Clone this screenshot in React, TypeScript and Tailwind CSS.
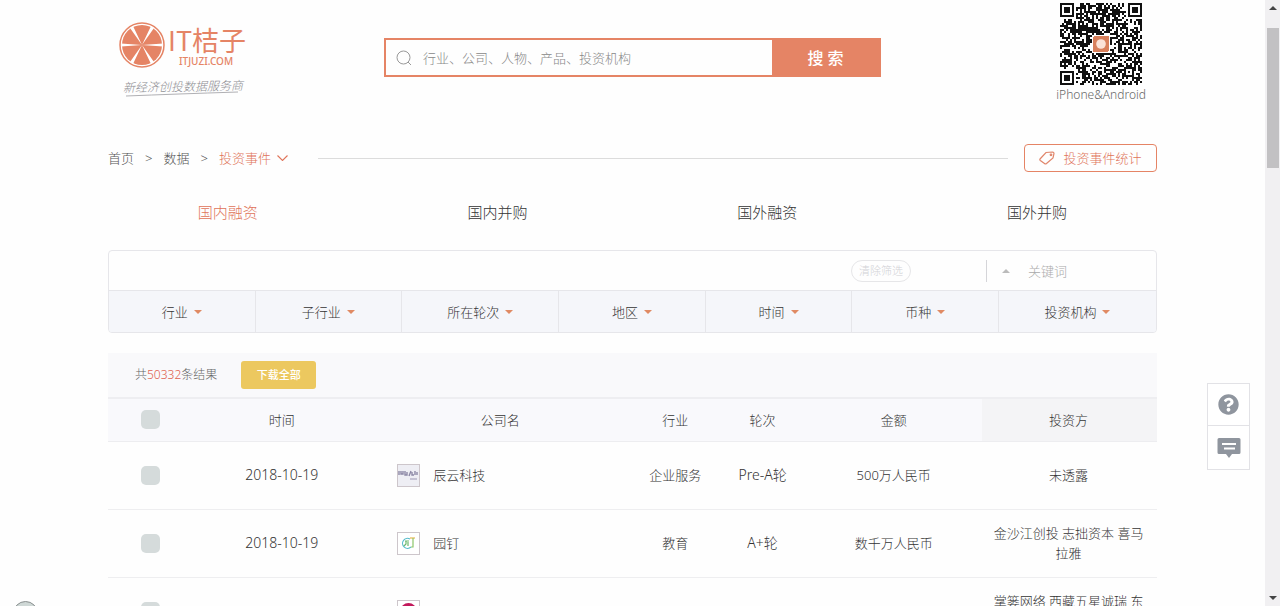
import React, { useState } from "react";
import { FaQuestionCircle } from "react-icons/fa";

const tabs = ["国内融资", "国内并购", "国外融资", "国外并购"];

const filters = ["行业", "子行业", "所在轮次", "地区", "时间", "币种", "投资机构"];

type Deal = {
  date: string;
  logo: "chenyun" | "yuanding" | "round";
  company: string;
  industry: string;
  round: string;
  amount: string;
  investors: string;
};

const deals: Deal[] = [
  { date: "2018-10-19", logo: "chenyun", company: "辰云科技", industry: "企业服务", round: "Pre-A轮", amount: "500万人民币", investors: "未透露" },
  { date: "2018-10-19", logo: "yuanding", company: "园钉", industry: "教育", round: "A+轮", amount: "数千万人民币", investors: "金沙江创投 志拙资本 喜马拉雅" },
  { date: "", logo: "round", company: "", industry: "", round: "", amount: "", investors: "掌篓网络 西藏五星诚瑞 东方" },
];

const QR_SIZE = 41;

// finder squares in three corners, one alignment square, noise elsewhere
function qrModules() {
  const cells: string[] = [];
  let seed = 20181;
  const ring = (x: number, y: number, cx: number, cy: number) => Math.max(Math.abs(x - cx), Math.abs(y - cy));
  for (let y = 0; y < QR_SIZE; y++) {
    for (let x = 0; x < QR_SIZE; x++) {
      seed = (seed * 1103515245 + 12345) % 2147483648;
      let dark = seed / 2147483648 > 0.42;
      const d = Math.min(ring(x, y, 3, 3), ring(x, y, 37, 3), ring(x, y, 3, 37));
      if (d <= 4) dark = d !== 2 && d !== 4;
      const a = ring(x, y, 34, 34);
      if (a <= 2) dark = a !== 1;
      if (dark) cells.push(`M${x} ${y}h1v1h-1z`);
    }
  }
  return cells.join("");
}

const qrPath = qrModules();

function QrCode() {
  return (
    <svg viewBox="0 0 41 41" className="w-[82px] h-[82px]" shapeRendering="crispEdges" role="img" aria-label="QR">
      <path d={qrPath} fill="#111" />
      <rect x="16" y="16" width="9" height="9" fill="#fff" />
      <rect x="16.5" y="16.5" width="8" height="8" rx="1" fill="#d9805c" />
      <circle cx="20.5" cy="20.5" r="2.4" fill="#fbe3d8" shapeRendering="auto" />
    </svg>
  );
}

function Logo() {
  return (
    <svg viewBox="0 0 140 84" className="w-[140px] h-[84px]" role="img" aria-label="IT桔子">
      <circle cx="26" cy="29" r="22" fill="#fff" stroke="#e58465" strokeWidth="1.5" />
      <circle cx="26" cy="29" r="20" fill="#e58465" />
      <g fill="#fff">
        <path d="M5 27.500L26 29L5 30.500zM47 27.500L26 29L47 30.500z" />
        <path d="M14 12L26 29L17 10zM38 46L26 29L35 48z" />
        <path d="M38 12L26 29L35 10zM14 46L26 29L17 48z" />
      </g>
      <text x="52" y="35" fontSize="27" fontWeight="400" fill="#e58465" className="font-['Noto_Sans_CJK_SC',sans-serif]">IT桔子</text>
      <text x="63" y="49" fontSize="10" fontWeight="500" fill="#e58465" className="font-['Noto_Sans',sans-serif]">ITJUZI.COM</text>
      <text x="7" y="76" fontSize="12" fill="#8b8b90" fontStyle="italic" transform="rotate(-1 7 76)" className="font-['Noto_Sans_CJK_SC',sans-serif]">新经济创投数据服务商</text>
      <path d="M10 80Q60 78 122 76" fill="none" stroke="#b0b0b4" strokeWidth="1" />
    </svg>
  );
}

function CompanyLogo({ kind }: { kind: Deal["logo"] }) {
  return (
    <svg viewBox="0 0 23 23" className="w-[23px] h-[23px] shrink-0">
      <rect x="0.5" y="0.5" width="22" height="22" fill={kind === "chenyun" ? "#eeeef4" : "#fff"} stroke="#cdc6cb" />
      {kind === "chenyun" && (
        <g fill="none" stroke="#8d89a6" strokeWidth="1.4">
          <path d="M2 7v4M4 7v3h2v-3M8 7v4h2v-3M12 12l2-5M15 8v3h2M18 7v4M20 8v3" />
          <path d="M13 15h7" stroke="#b4b1c6" />
        </g>
      )}
      {kind === "yuanding" && (
        <g fill="none" strokeWidth="1.2">
          <path d="M13 7a5 5 0 1 0 1 8" stroke="#58bccb" />
          <path d="M8 9h4M9 9v3l-2 2M11 10v4" stroke="#6cb96c" />
          <path d="M13 6h5" stroke="#e8b84f" />
          <path d="M16 6v9h-2" stroke="#8dc66a" />
        </g>
      )}
      {kind === "round" && <circle cx="11.5" cy="11" r="8" fill="#c2185b" />}
    </svg>
  );
}

function Caret({ className = "" }: { className?: string }) {
  return (
    <svg viewBox="0 0 8 4" className={"w-[8px] h-[4px] " + className} fill="currentColor">
      <path d="M0 0h8L4 4z" />
    </svg>
  );
}

function SelectBox({ label }: { label: string }) {
  return (
    <input
      type="checkbox"
      aria-label={label}
      className="block mx-auto appearance-none w-[19px] h-[19px] rounded-[5px] bg-[#d5dbdb] checked:bg-[#e58465]"
    />
  );
}

export default function App() {
  const [active, setActive] = useState(0);

  return (
    <div className="relative flex h-screen overflow-hidden bg-[#fefefe] text-[13px] leading-5 font-light text-[#333] font-['Noto_Sans','Noto_Sans_CJK_SC',sans-serif]">
      <main className="flex-1 min-w-0">
        <div className="max-w-[1049px] mx-auto">
          <header className="flex items-start h-[144px]">
            <a href="#" className="w-[276px] pl-2 pt-4">
              <Logo />
            </a>
            <form className="flex w-[497px] h-[39px] mt-[38px] border-2 border-[#e58465]" onSubmit={(e) => e.preventDefault()}>
              <label htmlFor="search" className="flex items-center pl-[10px] text-[#999]">
                <svg viewBox="0 0 16 16" className="w-4 h-4" fill="none" stroke="currentColor" strokeWidth="1">
                  <circle cx="7.5" cy="7.5" r="6.5" />
                  <path d="M12 12l3 3" />
                </svg>
              </label>
              <input
                id="search"
                type="text"
                placeholder="行业、公司、人物、产品、投资机构"
                className="flex-1 min-w-0 px-[11px] outline-none placeholder:text-[#888]"
              />
              <button className="w-[107px] bg-[#e58465] text-white text-base font-medium">搜 索</button>
            </form>
            <div className="flex flex-col items-center gap-[2px] ml-auto mr-[11px] pt-[3px]">
              <QrCode />
              <span className="text-xs leading-4 text-[#666]">iPhone&amp;Android</span>
            </div>
          </header>

          <div className="flex items-center">
            <nav className="flex items-center gap-[11px] text-[#555]">
              <a href="#">首页</a>
              <span>&gt;</span>
              <a href="#">数据</a>
              <span>&gt;</span>
              <a href="#" className="flex items-center gap-[6px] text-[#e0745a]">
                投资事件
                <svg viewBox="0 0 11 6" className="w-[11px] h-[6px]" fill="none" stroke="#e0745a" strokeWidth="1.1">
                  <path d="M0.5 0.5l5 5 5-5" />
                </svg>
              </a>
            </nav>
            <div className="flex-1 h-px ml-[30px] mr-4 bg-[#dcdcdc]" />
            <button className="flex items-center justify-center gap-2 w-[133px] h-7 rounded border border-[#e58465] text-[#e0745a] font-light">
              <svg viewBox="0 0 16 14" className="w-4 h-[14px]" fill="none" stroke="#e0856a" strokeWidth="1.2">
                <path d="M1 8L7 1.500L13.500 1Q15 1 15 2.500L14 7L7.500 12.500Q6.500 13.300 5.500 12.500L1.300 9.500Q0.500 8.800 1 8z" />
                <circle cx="12" cy="3.8" r="0.8" />
              </svg>
              投资事件统计
            </button>
          </div>

          <div className="grid grid-cols-4 -mx-[15px] mt-[30px] text-[15px]">
            {tabs.map((tab, i) => (
              <button key={tab} onClick={() => setActive(i)} className={i === active ? "text-[#e0745a]" : ""}>
                {tab}
              </button>
            ))}
          </div>

          <section className="mt-7 rounded border border-[#e6e6ea] overflow-hidden">
            <div className="flex items-center justify-end h-[39px]">
              <button className="w-[60px] h-[22px] mr-[75px] rounded-full border border-[#e6e6e8] text-[11px] leading-5 text-[#d2d2d6]">清除筛选</button>
              <div className="flex items-center w-[170px] h-[22px] border-l border-[#d5d5d9]">
                <Caret className="ml-[15px] rotate-180 text-[#bbb]" />
                <input aria-label="关键词" placeholder="关键词" className="w-[120px] ml-[18px] outline-none placeholder:text-[#aaa]" />
              </div>
            </div>
            <div className="grid grid-cols-[14fr_14fr_15fr_14fr_14fr_14fr_15fr] h-[42px] border-t border-[#e6e6ea] bg-[#f5f6fa] divide-x divide-[#e6e6ea]">
              {filters.map((name) => (
                <button key={name} aria-haspopup="true" className="flex items-center justify-center gap-[6px]">
                  {name}
                  <Caret className="text-[#e08a63]" />
                </button>
              ))}
            </div>
          </section>

          <section className="mt-5">
            <div className="flex items-center h-[44px] pl-[27px] bg-[#f9f9fb] text-xs text-[#666]">
              <p>
                共<span className="text-[#e0604f]">50332</span>条结果
              </p>
              <button className="w-[75px] h-7 ml-6 rounded-[3px] bg-[#ecc85f] text-white text-[11px] font-medium">下载全部</button>
            </div>
            <table className="w-full table-fixed text-center">
              <thead>
                <tr className="h-[43px] border-t-2 border-b border-t-[#eeeef1] border-b-[#ededf0] bg-[#f9f9fc]">
                  <th className="w-1/12 pr-[2px]"><SelectBox label="全选" /></th>
                  <th className="w-2/12 pr-[2px] font-light">时间</th>
                  <th className="w-3/12 pr-[2px] font-light">公司名</th>
                  <th className="w-1/12 pr-[2px] font-light">行业</th>
                  <th className="w-1/12 pr-[2px] font-light">轮次</th>
                  <th className="w-2/12 pr-[2px] font-light">金额</th>
                  <th className="w-2/12 pr-[2px] font-light bg-[#f4f4f6]">投资方</th>
                </tr>
              </thead>
              <tbody>
                {deals.map((deal, i) => (
                  <tr key={i} className="h-[68px] border-b border-[#eeeef0]">
                    <td className="pr-[2px]"><SelectBox label={deal.company || "选择"} /></td>
                    <td className="pr-[2px] text-sm">{deal.date}</td>
                    <td>
                      <div className="flex items-center gap-[13px] pl-[27px]">
                        <CompanyLogo kind={deal.logo} />
                        {deal.company}
                      </div>
                    </td>
                    <td className="pr-[2px]">{deal.industry}</td>
                    <td className="pr-[2px] text-sm">{deal.round}</td>
                    <td className="pr-[2px]">{deal.amount}</td>
                    <td className="pl-[10px] pr-3">{deal.investors}</td>
                  </tr>
                ))}
              </tbody>
            </table>
          </section>
        </div>
      </main>

      {/* page scroll bar */}
      <div className="flex flex-col items-center justify-between w-[15px] py-[6px] bg-[#f1f0f2] text-[#444]">
        <Caret className="rotate-180" />
        <div className="w-3 h-[140px] mt-[18px] mb-auto bg-[#c2c1c3]" />
        <Caret />
      </div>

      {/* floating help and feedback */}
      <div className="absolute right-[30px] top-[383px] w-[43px] border border-[#e2e2e6] bg-white text-[#8f959e] divide-y divide-[#e2e2e6]">
        <button aria-label="帮助" className="flex items-center justify-center w-full h-[42px]">
          <FaQuestionCircle size={21} />
        </button>
        <button aria-label="反馈" className="flex items-center justify-center w-full h-[43px]">
          <svg viewBox="0 0 24 22" className="w-6 h-[22px]">
            <path d="M2 1h20q1.500 0 1.500 1.500v13q0 1.500-1.500 1.500h-7l-3 4-3-4H2Q.5 17 .5 15.500v-13Q.5 1 2 1z" fill="currentColor" />
            <path d="M5 7h14M7 11.500h11" stroke="#fff" strokeWidth="2" />
          </svg>
        </button>
      </div>

      <div className="absolute left-[13px] -bottom-[20px] w-[25px] h-[25px] rounded-full border border-[#8a9090] bg-[#cfd8d6]" />
    </div>
  );
}
